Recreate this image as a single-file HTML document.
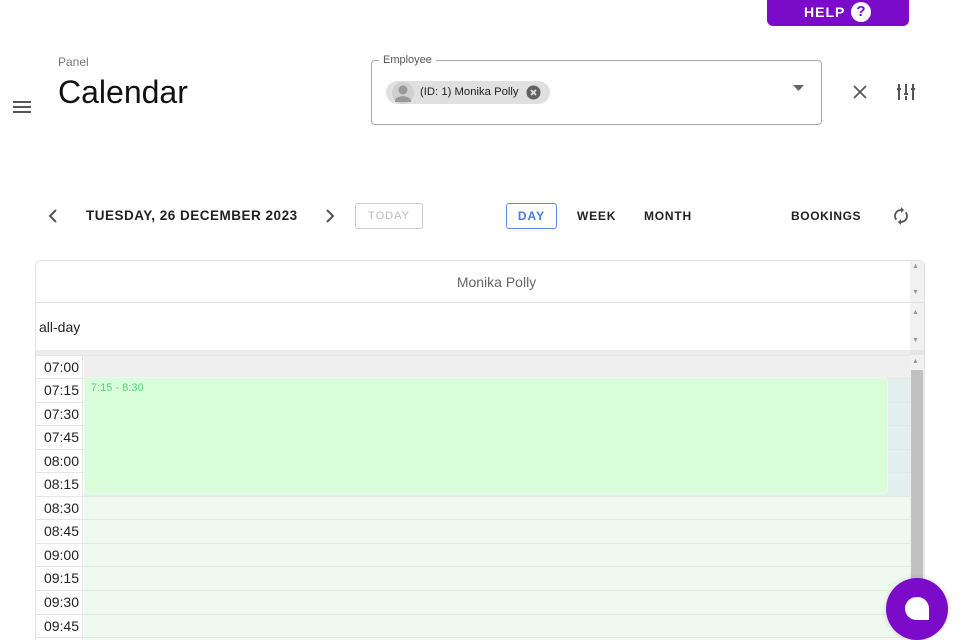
<!DOCTYPE html>
<html style="overflow:hidden;height:640px"><head><meta charset="utf-8">
<style>
*{box-sizing:border-box;margin:0;padding:0}
html,body{width:960px;height:640px;overflow:hidden}
body{background:#fff;font-family:"Liberation Sans",Arial,sans-serif;position:relative;color:#222}
.a{position:absolute}
.btn{font-size:12px;font-weight:bold;letter-spacing:0.8px;color:#222}
.row{position:absolute;left:36px;width:874px;height:24px;border-top:1px solid #e6e6e6}
.t{position:absolute;left:0;width:47px;height:100%;background:#fff;text-align:right;padding-right:4px;font-size:14px;line-height:23px;color:#222}
.c{position:absolute;left:48px;right:0;height:100%;background:#f0f9ef}
</style></head><body>

<div class="a" style="left:767px;top:0;width:142px;height:26px;background:#7b0ac9;border-radius:0 0 6px 6px;color:#fff;font-weight:bold;font-size:14px;letter-spacing:1px">
<span class="a" style="left:37px;top:4px">HELP</span>
<span class="a" style="left:84px;top:2px;width:20px;height:20px;border-radius:50%;background:#fff;color:#7b0ac9;text-align:center;font-size:15px;line-height:20px;letter-spacing:0">?</span>
</div>

<svg class="a" style="left:12px;top:98px" width="20" height="18"><path d="M1 4h18M1 9h18M1 14h18" stroke="#555" stroke-width="2"/></svg>
<div class="a" style="left:58px;top:55px;font-size:12px;color:#777">Panel</div>
<div class="a" style="left:58px;top:74px;font-size:32px;color:#111">Calendar</div>

<div class="a" style="left:371px;top:60px;width:451px;height:65px;border:1px solid #aaa;border-radius:4px"></div>
<div class="a" style="left:379px;top:54px;background:#fff;padding:0 4px;font-size:11px;color:#555">Employee</div>
<div class="a" style="left:386px;top:81px;width:164px;height:23px;border-radius:12px;background:#e0e0e0"></div>
<svg class="a" style="left:392px;top:82px" width="22" height="22"><circle cx="11" cy="11" r="11" fill="#d0d0d0"/><circle cx="11" cy="8" r="4.5" fill="#999"/><path d="M3 18c2-5 14-5 16 0v2H3z" fill="#999"/></svg>
<div class="a" style="left:420px;top:86px;font-size:11.3px;color:#222">(ID: 1) Monika Polly</div>
<svg class="a" style="left:526px;top:85px" width="15" height="15"><circle cx="7.5" cy="7.5" r="7" fill="#616161"/><path d="M5 5l5 5M10 5l-5 5" stroke="#e0e0e0" stroke-width="1.8"/></svg>
<svg class="a" style="left:793px;top:85px" width="12" height="6"><path d="M0 0h11L5.5 6z" fill="#666"/></svg>
<svg class="a" style="left:852px;top:84px" width="16" height="16"><path d="M2 2l12 12M14 2L2 14" stroke="#555" stroke-width="1.8"/></svg>
<svg class="a" style="left:896px;top:82px" width="20" height="20"><path d="M3 2v4M1 7h4M3 8v10M10 2v10M8 12h4M10 14v4M17 2v4M15 7h4M17 8v10" stroke="#555" stroke-width="2"/></svg>

<svg class="a" style="left:48px;top:209px" width="10" height="14"><path d="M8 1L2 7l6 6" stroke="#555" stroke-width="2" fill="none"/></svg>
<div class="a btn" style="left:86px;top:208px;font-size:13.5px;letter-spacing:0.5px">TUESDAY, 26 DECEMBER 2023</div>
<svg class="a" style="left:325px;top:209px" width="10" height="14"><path d="M2 1l6 6-6 6" stroke="#555" stroke-width="2" fill="none"/></svg>
<div class="a" style="left:355px;top:203px;width:68px;height:26px;border:1px solid #ccc;border-radius:3px;color:#bbb;font-size:11px;letter-spacing:1px;text-align:center;line-height:24px">TODAY</div>
<div class="a" style="left:506px;top:203px;width:51px;height:26px;border:1px solid #5b8def;border-radius:3px;color:#4a78e6;font-size:12px;font-weight:bold;letter-spacing:1px;text-align:center;line-height:24px">DAY</div>
<div class="a btn" style="left:577px;top:209px">WEEK</div>
<div class="a btn" style="left:644px;top:209px">MONTH</div>
<div class="a btn" style="left:791px;top:209px;letter-spacing:0.6px">BOOKINGS</div>
<svg class="a" style="left:891px;top:206px" width="20" height="20"><path d="M10 4a6 6 0 0 0-6 6c0 1.5.5 2.7 1.3 3.7M10 16a6 6 0 0 0 6-6c0-1.5-.5-2.7-1.3-3.7" stroke="#555" stroke-width="1.8" fill="none"/><path d="M10 1v6l3-3zM10 19v-6l-3 3z" fill="#555"/></svg>

<div class="a" style="left:35px;top:260px;width:890px;height:380px;border:1px solid #e2e2e2;border-bottom:none;border-radius:6px 6px 0 0"></div>
<div class="a" style="left:83px;top:274px;width:827px;text-align:center;font-size:14px;color:#666">Monika Polly</div>
<div class="a" style="left:36px;top:302px;width:874px;border-top:1px solid #e2e2e2"></div>
<div class="a" style="left:39px;top:319px;font-size:14px;color:#222">all-day</div>
<div class="a" style="left:36px;top:350px;width:874px;height:5px;background:#ececec"></div>
<div class="a" style="left:910px;top:261px;width:14px;height:379px;background:#f1f1f1"></div>
<div class="a" style="left:910px;top:302px;width:14px;border-top:1px solid #e2e2e2"></div>
<div class="a" style="left:910px;top:350px;width:14px;height:5px;background:#e5e5e5"></div>
<div class="a" style="left:912px;top:263px;font-size:7px;color:#999">▲</div>
<div class="a" style="left:912px;top:289px;font-size:7px;color:#999">▼</div>
<div class="a" style="left:912px;top:309px;font-size:7px;color:#999">▲</div>
<div class="a" style="left:912px;top:337px;font-size:7px;color:#999">▼</div>
<div class="a" style="left:912px;top:358px;font-size:7px;color:#999">▲</div>
<div class="a" style="left:911px;top:370px;width:12px;height:270px;background:#c1c1c1"></div>

<div class="row" style="top:355px"><div class="t">07:00</div><div class="c" style="background:#efefef"></div></div>
<div class="row" style="top:378px"><div class="t">07:15</div><div class="c" style="background:#e2f1f0"></div></div>
<div class="row" style="top:402px"><div class="t">07:30</div><div class="c" style="background:#e2f1f0"></div></div>
<div class="row" style="top:425px"><div class="t">07:45</div><div class="c" style="background:#e2f1f0"></div></div>
<div class="row" style="top:449px"><div class="t">08:00</div><div class="c" style="background:#e2f1f0"></div></div>
<div class="row" style="top:472px"><div class="t">08:15</div><div class="c" style="background:#e2f1f0"></div></div>
<div class="row" style="top:496px"><div class="t">08:30</div><div class="c"></div></div>
<div class="row" style="top:519px"><div class="t">08:45</div><div class="c"></div></div>
<div class="row" style="top:543px"><div class="t">09:00</div><div class="c"></div></div>
<div class="row" style="top:566px"><div class="t">09:15</div><div class="c"></div></div>
<div class="row" style="top:590px"><div class="t">09:30</div><div class="c"></div></div>
<div class="row" style="top:614px"><div class="t">09:45</div><div class="c"></div></div>
<div class="row" style="top:637px"><div class="t"></div><div class="c"></div></div>
<div class="a" style="left:82px;top:355px;height:285px;border-left:1px solid #e6e6e6"></div>

<div class="a" style="left:84px;top:377px;width:804px;height:117px;background:#d9fdd9;border:1px solid #eafbe8;border-radius:5px"></div>
<div class="a" style="left:91px;top:382px;font-size:11px;color:#5ccf78">7:15 - 8:30</div>

<div class="a" style="left:886px;top:578px;width:62px;height:62px;border-radius:50%;background:#7b0ac9;box-shadow:0 0 6px rgba(0,0,0,.15)"></div>
<div class="a" style="left:905px;top:597px;width:24px;height:23px;background:#fff;border-radius:12px 12px 0 12px"></div>
</body></html>
